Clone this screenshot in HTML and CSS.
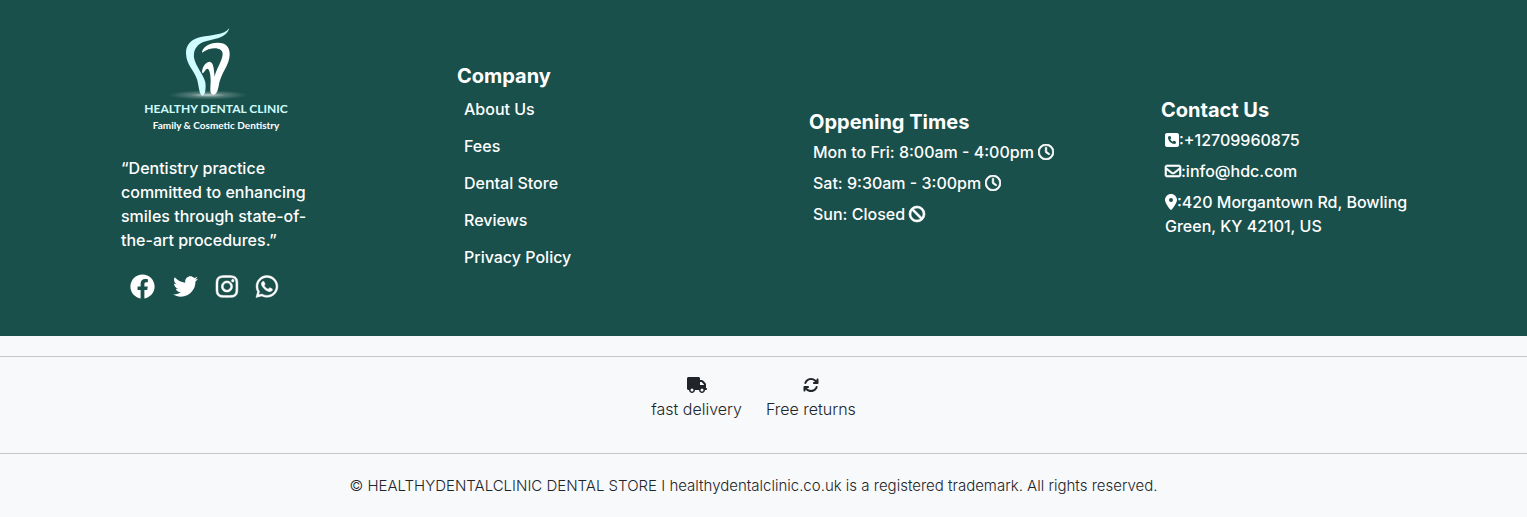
FILE: index.html
```html
<!DOCTYPE html>
<html lang="en">
<head>
<meta charset="utf-8">
<meta name="viewport" content="width=device-width, initial-scale=1">
<title>Healthy Dental Clinic</title>
<link rel="stylesheet" href="styles.css">
</head>
<body>
<svg class="sprite" aria-hidden="true">
  <symbol id="clock" viewBox="0 0 512 512"><path d="M464 256A208 208 0 1 1 48 256a208 208 0 1 1 416 0zM0 256a256 256 0 1 0 512 0A256 256 0 1 0 0 256zM232 120V256c0 8 4 15.500 10.700 20l96 64c11 7.400 25.900 4.400 33.300-6.700s4.400-25.900-6.700-33.300L280 243.200V120c0-13.300-10.700-24-24-24s-24 10.700-24 24z"/></symbol>
</svg>
<footer class="footer">
  <section class="about">
    <a class="logo" href="#">
      <svg class="tooth" viewBox="-36 12 288 228" aria-hidden="true">
        <defs><radialGradient id="glow"><stop offset="0" stop-color="#fff" stop-opacity=".75"/><stop offset=".45" stop-color="#fff" stop-opacity=".25"/><stop offset="1" stop-color="#fff" stop-opacity="0"/></radialGradient></defs>
        <ellipse cx="84" cy="225" rx="118" ry="14" fill="url(#glow)"/>
        <path fill="#cffcff" d="M148 24C132 46 96 44 62 51C34 57 17 74 18 100C19 136 42 150 51 178C57 198 57 226 68 227C77 226 79 196 75 184C70 165 49 140 43 118C38 94 48 75 70 66C98 56 138 58 148 24Z"/>
        <path fill="#fff" d="M66 98C66 82 88 68 113 68C138 68 150 82 149 104C148 134 127 155 119 184C115 200 114 224 100 224C87 223 92 202 92 180C92 163 88 146 82 146C76 147 73 158 67 160C63 148 75 126 88 125C102 126 101 148 104 170C108 148 127 123 128 102C128 82 95 78 66 98Z"/>
      </svg>
      <span class="logo-name">HEALTHY DENTAL CLINIC</span>
      <span class="logo-tag">Family &amp; Cosmetic Dentistry</span>
    </a>
    <p class="quote">“Dentistry practice committed to enhancing smiles through state-of-the-art procedures.”</p>
    <nav class="social" aria-label="Social media">
      <a href="#" aria-label="Facebook"><svg viewBox="0 0 512 512"><path d="M504 256C504 119 393 8 256 8S8 119 8 256c0 123.780 90.690 226.380 209.250 245V327.690h-63V256h63v-54.640c0-62.150 37-96.480 93.670-96.480 27.140 0 55.520 4.840 55.520 4.840v61h-31.280c-30.800 0-40.410 19.120-40.410 38.730V256h68.780l-11 71.690h-57.780V501C413.310 482.380 504 379.780 504 256z"/></svg></a>
      <a href="#" aria-label="Twitter"><svg viewBox="0 0 512 512"><path d="M459.370 151.716c.325 4.548.325 9.097.325 13.645 0 138.720-105.583 298.558-298.558 298.558-59.452 0-114.680-17.219-161.137-47.106 8.447.974 16.568 1.299 25.340 1.299 49.055 0 94.213-16.568 130.274-44.832-46.132-.975-84.792-31.188-98.112-72.772 6.498.974 12.995 1.624 19.818 1.624 9.421 0 18.843-1.300 27.614-3.573-48.081-9.747-84.143-51.980-84.143-102.985v-1.299c13.969 7.797 30.214 12.670 47.431 13.319-28.264-18.843-46.781-51.005-46.781-87.391 0-19.492 5.197-37.360 14.294-52.954 51.655 63.675 129.300 105.258 216.365 109.807-1.624-7.797-2.599-15.918-2.599-24.040 0-57.828 46.782-104.934 104.934-104.934 30.213 0 57.502 12.670 76.670 33.137 23.715-4.548 46.456-13.320 66.599-25.340-7.798 24.366-24.366 44.833-46.132 57.827 21.117-2.273 41.584-8.122 60.426-16.243-14.292 20.791-32.161 39.308-52.628 54.253z"/></svg></a>
      <a class="outlined" href="#" aria-label="Instagram"><svg viewBox="0 0 448 512"><path d="M224.100 141c-63.600 0-114.900 51.300-114.900 114.900s51.300 114.900 114.900 114.900S339 319.500 339 255.900 287.700 141 224.100 141zm0 189.600c-41.100 0-74.700-33.500-74.700-74.700s33.500-74.700 74.700-74.700 74.700 33.500 74.700 74.700-33.600 74.700-74.700 74.700zm146.400-194.300c0 14.900-12 26.800-26.800 26.800-14.900 0-26.800-12-26.800-26.800s12-26.800 26.800-26.800 26.800 12 26.800 26.800zm76.100 27.200c-1.700-35.900-9.900-67.700-36.200-93.900-26.200-26.200-58-34.400-93.900-36.200-37-2.100-147.900-2.100-184.900 0-35.800 1.700-67.600 9.900-93.900 36.100s-34.400 58-36.200 93.900c-2.100 37-2.100 147.900 0 184.900 1.700 35.900 9.900 67.700 36.200 93.900s58 34.400 93.900 36.200c37 2.100 147.900 2.100 184.900 0 35.900-1.700 67.700-9.900 93.900-36.200 26.200-26.200 34.400-58 36.200-93.900 2.100-37 2.100-147.800 0-184.800zM398.800 388c-7.800 19.600-22.900 34.700-42.600 42.600-29.500 11.700-99.500 9-132.100 9s-102.700 2.600-132.100-9c-19.600-7.800-34.700-22.900-42.600-42.600-11.700-29.500-9-99.500-9-132.100s-2.600-102.700 9-132.100c7.800-19.600 22.900-34.700 42.600-42.600 29.500-11.700 99.500-9 132.100-9s102.700-2.600 132.100 9c19.600 7.800 34.700 22.900 42.600 42.600 11.700 29.500 9 99.500 9 132.100s2.700 102.700-9 132.100z"/></svg></a>
      <a class="outlined" href="#" aria-label="WhatsApp"><svg viewBox="0 0 448 512"><path d="M380.900 97.100C339 55.100 283.200 32 223.900 32c-122.400 0-222 99.600-222 222 0 39.100 10.200 77.300 29.600 111L0 480l117.700-30.900c32.400 17.700 68.900 27 106.100 27h.1c122.300 0 224.100-99.600 224.100-222 0-59.300-25.200-115-67.100-157zm-157 341.600c-33.200 0-65.700-8.900-94-25.700l-6.700-4-69.800 18.300L72 359.200l-4.400-7c-18.500-29.400-28.200-63.300-28.200-98.200 0-101.700 82.800-184.500 184.600-184.500 49.300 0 95.600 19.200 130.400 54.100 34.800 34.900 56.200 81.200 56.100 130.500 0 101.800-84.900 184.600-186.600 184.600zm101.200-138.200c-5.500-2.800-32.800-16.200-37.900-18-5.100-1.900-8.800-2.800-12.500 2.800-3.700 5.600-14.300 18-17.600 21.800-3.200 3.700-6.500 4.200-12 1.400-32.600-16.300-54-29.100-75.500-66-5.700-9.800 5.700-9.100 16.300-30.300 1.800-3.700.9-6.900-.5-9.700-1.400-2.800-12.500-30.100-17.100-41.200-4.500-10.800-9.100-9.300-12.500-9.500-3.200-.2-6.900-.2-10.600-.2-3.700 0-9.700 1.400-14.800 6.900-5.100 5.600-19.400 19-19.400 46.300 0 27.300 19.900 53.700 22.600 57.400 2.800 3.700 39.100 59.700 94.800 83.800 35.200 15.200 49 16.500 66.600 13.900 10.700-1.600 32.800-13.400 37.400-26.400 4.600-13 4.600-24.100 3.200-26.400-1.300-2.500-5-3.900-10.500-6.600z"/></svg></a>
    </nav>
  </section>
  <section>
    <h2>Company</h2>
    <ul class="links">
      <li><a href="#">About Us</a></li>
      <li><a href="#">Fees</a></li>
      <li><a href="#">Dental Store</a></li>
      <li><a href="#">Reviews</a></li>
      <li><a href="#">Privacy Policy</a></li>
    </ul>
  </section>
  <section>
    <h2>Oppening Times</h2>
    <ul class="details">
      <li>Mon to Fri: 8:00am - 4:00pm <svg class="icon bold" viewBox="0 0 512 512"><use href="#clock"/></svg></li>
      <li>Sat: 9:30am - 3:00pm <svg class="icon bold" viewBox="0 0 512 512"><use href="#clock"/></svg></li>
      <li>Sun: Closed <svg class="icon bold" viewBox="0 0 512 512"><path d="M367.200 412.500L99.500 144.800C77.100 176.100 64 214.500 64 256c0 106 86 192 192 192c41.500 0 79.900-13.100 111.200-35.500zm45.300-45.300C434.900 335.900 448 297.500 448 256c0-106-86-192-192-192c-41.500 0-79.900 13.100-111.200 35.500L412.500 367.200zM0 256a256 256 0 1 1 512 0A256 256 0 1 1 0 256z"/></svg></li>
    </ul>
  </section>
  <section>
    <h2>Contact Us</h2>
    <ul class="details">
      <li><a href="tel:+12709960875"><svg class="icon narrow" viewBox="0 0 448 512"><path d="M64 32C28.700 32 0 60.700 0 96V416c0 35.300 28.700 64 64 64H384c35.300 0 64-28.700 64-64V96c0-35.300-28.700-64-64-64H64zm90.700 96.700c9.700-2.600 19.900 2.300 23.700 11.600l20 48c3.400 8.200 1 17.600-5.800 23.200L168 231.700c16.600 35.200 45.100 63.700 80.300 80.300l20.200-24.700c5.600-6.800 15-9.200 23.200-5.800l48 20c9.300 3.900 14.200 14 11.600 23.700l-12 44C336.900 378 328.900 384 320 384C196.300 384 96 283.700 96 160c0-8.900 6-16.900 14.700-19.300l44-12z"/></svg>:+12709960875</a></li>
      <li><a href="mailto:info@hdc.com"><svg class="icon bold" viewBox="0 0 512 512"><path d="M64 112c-8.800 0-16 7.200-16 16v22.100L220.500 291.700c20.700 17 50.400 17 71.100 0L464 150.100V128c0-8.800-7.200-16-16-16H64zM48 212.200V384c0 8.800 7.200 16 16 16H448c8.800 0 16-7.200 16-16V212.200L322 328.800c-38.400 31.500-93.700 31.500-132 0L48 212.200zM0 128C0 92.700 28.700 64 64 64H448c35.300 0 64 28.700 64 64V384c0 35.300-28.700 64-64 64H64c-35.300 0-64-28.700-64-64V128z"/></svg>:info@hdc.com</a></li>
      <li><svg class="icon pin" viewBox="0 0 384 512"><path d="M215.700 499.200C267 435 384 279.400 384 192C384 86 298 0 192 0S0 86 0 192c0 87.400 117 243 168.300 307.200c12.300 15.300 35.100 15.300 47.400 0zM192 128a64 64 0 1 1 0 128 64 64 0 1 1 0-128z"/></svg>:420 Morgantown Rd, Bowling Green, KY 42101, US</li>
    </ul>
  </section>
</footer>
<div class="perks">
  <div class="perk">
    <svg class="truck" viewBox="0 0 640 512" aria-hidden="true"><path d="M48 0C21.500 0 0 21.500 0 48V368c0 26.500 21.500 48 48 48H64c0 53 43 96 96 96s96-43 96-96H384c0 53 43 96 96 96s96-43 96-96h32c17.700 0 32-14.300 32-32s-14.300-32-32-32V288 256 237.300c0-17-6.700-33.300-18.700-45.300L512 114.700c-12-12-28.300-18.700-45.300-18.700H416V48c0-26.500-21.500-48-48-48H48zM416 160h50.700L544 237.300V256H416V160zM112 416a48 48 0 1 1 96 0 48 48 0 1 1-96 0zm368-48a48 48 0 1 1 0 96 48 48 0 1 1 0-96z"/></svg>
    <span>fast delivery</span>
  </div>
  <div class="perk">
    <svg class="rotate" viewBox="0 0 512 512" aria-hidden="true"><path d="M105.100 202.600c7.700-21.800 20.200-42.300 37.800-59.800c62.500-62.500 163.800-62.500 226.300 0L386.300 160H352c-17.700 0-32 14.300-32 32s14.300 32 32 32H463.500c17.700 0 32-14.300 32-32V80c0-17.700-14.300-32-32-32s-32 14.300-32 32v35.200L414.400 97.600c-87.500-87.500-229.300-87.500-316.800 0C73.200 122 55.600 150.700 44.800 181.400c-5.900 16.700 2.900 34.900 19.500 40.800s34.900-2.900 40.800-19.500zM39 289.300c-5 1.500-9.800 4.200-13.700 8.200c-4 4-6.700 8.800-8.100 14c-.8 2.900-1.200 6-1.200 9.100V432c0 17.700 14.300 32 32 32s32-14.300 32-32V396.900l17.600 17.500c87.500 87.400 229.300 87.400 316.700 0c24.400-24.400 42.100-53.100 52.900-83.700c5.900-16.700-2.900-34.900-19.500-40.800s-34.900 2.900-40.800 19.500c-7.700 21.800-20.200 42.300-37.800 59.800c-62.500 62.500-163.800 62.500-226.300 0L125.600 352H160c17.700 0 32-14.300 32-32s-14.300-32-32-32H48.400c-3.200 0-6.400.4-9.400 1.300z"/></svg>
    <span>Free returns</span>
  </div>
</div>
<p class="copyright">© HEALTHYDENTALCLINIC DENTAL STORE I healthydentalclinic.co.uk is a registered trademark. All rights reserved.</p>
</body>
</html>
```
FILE: styles.css
```css
* { box-sizing: border-box; }
body {
  margin: 0;
  background: #f8f9fb;
  color: #212529;
  font: 300 16px/24px Inter, "Open Sans", sans-serif;
}
a { color: inherit; text-decoration: none; }
h2, p, ul { margin: 0; padding: 0; }
ul { list-style: none; display: grid; }
svg { fill: currentColor; }
.sprite { display: none; }
.footer {
  display: grid;
  grid-template-columns: repeat(4, minmax(0, 1fr));
  align-items: center;
  padding: 24px 14px 37px 105px;
  background: #1a504c;
  color: #fff;
  font-weight: 500;
}
.footer section { padding-top: 12px; }
.footer .about { padding: 0 0 0 16px; }
.footer h2 { font-size: 20px; line-height: 24px; font-weight: 700; }
.logo {
  display: flex;
  flex-direction: column;
  align-items: center;
  width: 190px;
}
.tooth { width: 96px; height: 76px; }
.logo-name {
  color: #cffcff;
  font: 700 12px/18px Lato, sans-serif;
  white-space: nowrap;
}
.logo-tag { font: 700 10px/14px Lato, sans-serif; }
.quote { width: 190px; margin-top: 24px; }
.social { display: flex; gap: 18px; margin: 22px 0 0 9px; }
.social svg { display: block; height: 25px; overflow: visible; }
.outlined { stroke: currentColor; stroke-width: 10; }
.links { gap: 13px; margin-top: 9px; padding: 0 0 3px 7px; }
.details { gap: 7px; margin-top: 6px; padding: 0 86px 0 4px; white-space: nowrap; }
.details li:last-child { white-space: normal; }
.icon { width: 16px; height: 16px; vertical-align: -2px; overflow: visible; }
.bold { stroke: currentColor; stroke-width: 20; }
.narrow { width: 14px; }
.pin { width: 12px; }
.perks {
  display: flex;
  justify-content: center;
  gap: 24px;
  margin-top: 20px;
  padding: 16px 20px 32px 0;
  border: solid #c3c5c8;
  border-width: 1px 0;
}
.perk { display: flex; flex-direction: column; align-items: center; }
.perk svg { height: 16px; margin: 4px 0; }
.copyright { padding: 20px 20px 19px 0; font-size: 15px; text-align: center; }
```
